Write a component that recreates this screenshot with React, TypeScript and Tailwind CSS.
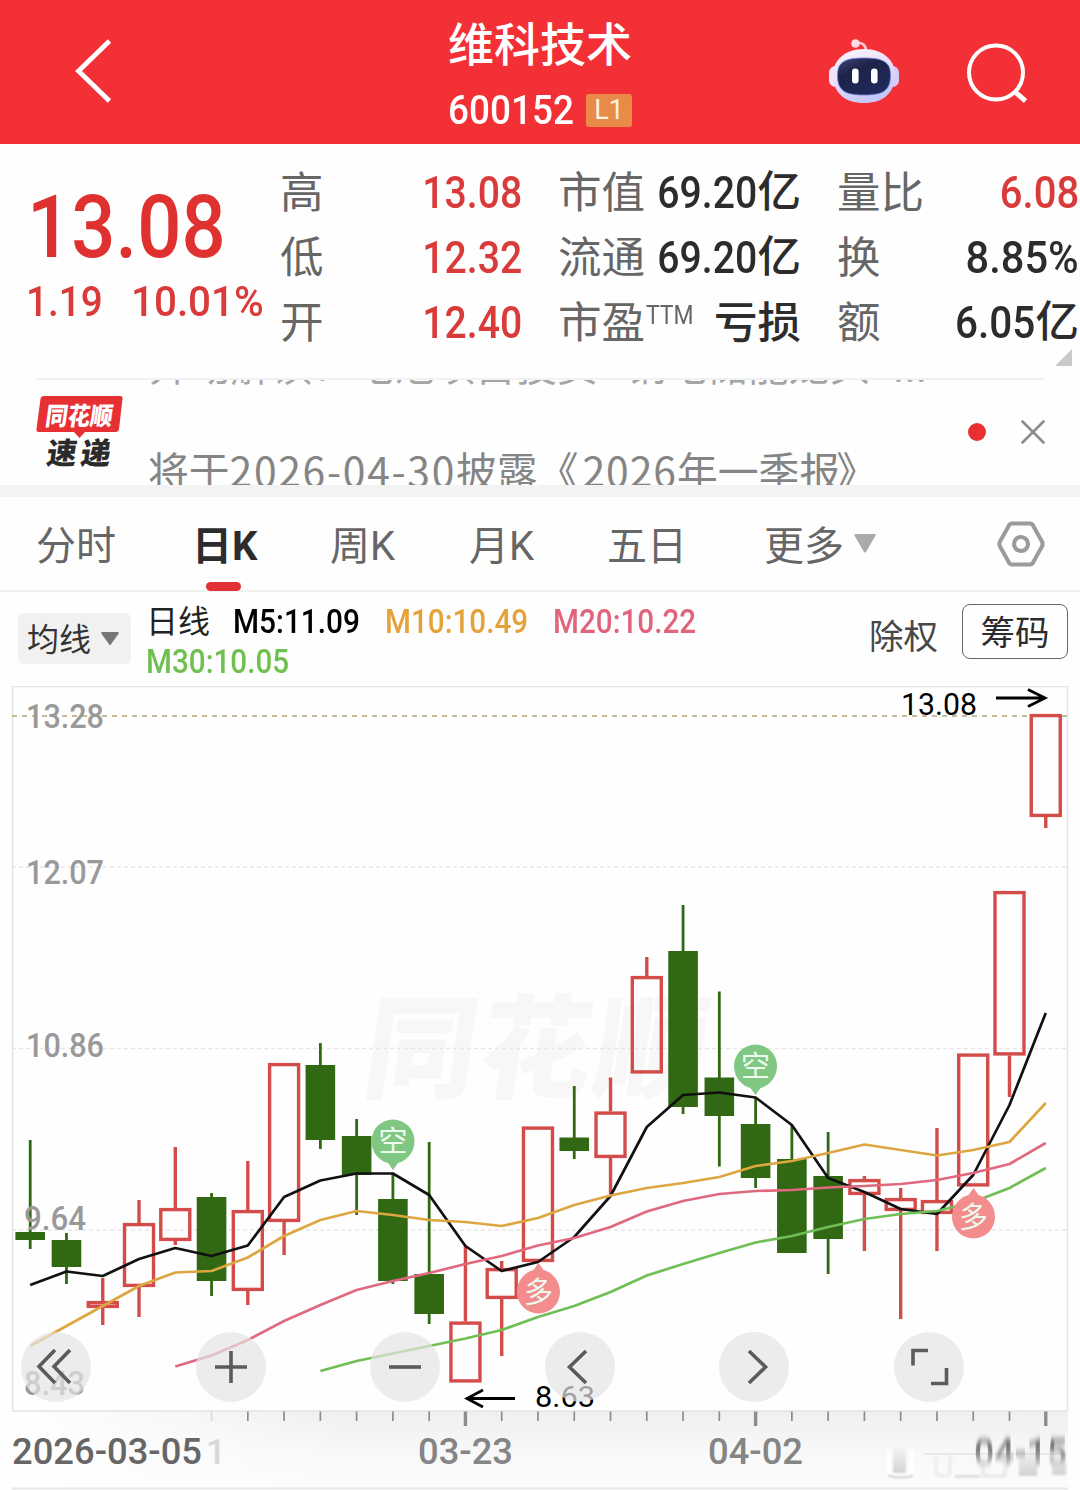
import React from "react";

type Candle = {
  up: boolean;
  high: number;
  top: number;
  bottom: number;
  low: number;
};

type Stat = {
  label: string;
  sup?: string;
  value: string;
  unit?: string;
  color?: string;
  stretch?: string;
};

const STEP = 36.27;
const FIRST_X = 30.2;
const xAt = (i: number) => FIRST_X + i * STEP;

const c = (up: boolean, high: number, top: number, bottom: number, low: number): Candle => ({ up, high, top, bottom, low });

const candles: Candle[] = [
  c(false, 1140, 1232, 1240, 1249),
  c(false, 1233, 1240, 1267, 1284),
  c(true, 1278, 1301, 1308, 1325),
  c(true, 1200, 1223, 1287, 1317),
  c(true, 1147, 1208, 1241, 1245),
  c(false, 1193, 1197, 1281, 1296),
  c(true, 1161, 1210, 1291, 1305),
  c(true, 1063, 1063, 1222, 1255),
  c(false, 1043, 1065, 1140, 1149),
  c(false, 1119, 1136, 1175, 1215),
  c(false, 1174, 1199, 1281, 1284),
  c(false, 1142, 1274, 1314, 1324),
  c(true, 1246, 1321.5, 1382.5, 1382.5),
  c(true, 1261, 1268, 1299, 1356),
  c(true, 1126.5, 1126.5, 1262, 1262),
  c(false, 1086, 1137.5, 1151, 1159),
  c(true, 1077.5, 1111.5, 1158, 1194),
  c(true, 957, 976, 1073.5, 1073.5),
  c(false, 905, 951, 1107, 1114),
  c(false, 991.5, 1077.5, 1116, 1166.5),
  c(false, 1098, 1124, 1178, 1188),
  c(false, 1125, 1159, 1253, 1253),
  c(false, 1132, 1176, 1239, 1274),
  c(true, 1176, 1179, 1195, 1251),
  c(true, 1188, 1198, 1211, 1319),
  c(true, 1128, 1200, 1214, 1251),
  c(true, 1053.5, 1053.5, 1186.5, 1186.5),
  c(true, 891, 891, 1055.5, 1097),
  c(true, 714, 714, 817, 828),
];

const ma5 = [1285, 1271.5, 1276, 1259, 1248, 1256, 1245.5, 1197, 1180.5, 1173.5, 1173.5, 1195, 1246, 1271, 1262, 1237, 1196, 1127, 1095, 1092.5, 1097.5, 1125, 1178, 1192, 1209, 1214, 1175, 1105, 1013];
const ma10 = [1346, 1326, 1306, 1286, 1272.5, 1271, 1257.5, 1236, 1220, 1211, 1215, 1220, 1222, 1226, 1218, 1205, 1195.5, 1188, 1183, 1177, 1166, 1161, 1153, 1144.5, 1150, 1155.5, 1150, 1142, 1103];
const ma20 = [1366.5, 1355.5, 1340, 1321, 1305, 1290, 1281, 1273, 1264, 1256, 1245.5, 1238, 1227, 1211.5, 1201, 1194, 1191, 1190, 1187.5, 1186, 1184, 1180, 1173, 1164, 1143];
const ma30 = [1371, 1361, 1353.5, 1346, 1338.5, 1330, 1317, 1306, 1292, 1275.5, 1264, 1253, 1242.5, 1236, 1227, 1219, 1214, 1211, 1202, 1188, 1168];

const toPoints = (ys: number[]) => {
  const offset = candles.length - ys.length;
  return ys.map((y, i) => `${xAt(i + offset)},${y}`).join(" ");
};

const stats: Stat[][] = [
  [
    { label: "高", value: "13.08", color: "text-[#d93a3a]" },
    { label: "低", value: "12.32", color: "text-[#d93a3a]" },
    { label: "开", value: "12.40", color: "text-[#d93a3a]" },
  ],
  [
    { label: "市值", value: "69.20", unit: "亿" },
    { label: "流通", value: "69.20", unit: "亿" },
    { label: "市盈", sup: "TTM", value: "", unit: "亏损" },
  ],
  [
    { label: "量比", value: "6.08", color: "text-[#d93a3a]", stretch: "scale-x-[0.91]" },
    { label: "换", value: "8.85%", stretch: "scale-x-[0.945]" },
    { label: "额", value: "6.05", unit: "亿", stretch: "scale-x-[0.92]" },
  ],
];

function RobotIcon() {
  return (
    <svg width="72" height="68" viewBox="0 0 72 68">
      <defs>
        <linearGradient id="shell" x1="0" y1="0" x2="0.4" y2="1">
          <stop offset="0" stopColor="#fff6fb" />
          <stop offset="0.6" stopColor="#e6dcfa" />
          <stop offset="1" stopColor="#c5c8f8" />
        </linearGradient>
        <linearGradient id="visor" x1="0" y1="0" x2="0.6" y2="1">
          <stop offset="0" stopColor="#3d4370" />
          <stop offset="0.4" stopColor="#1d2348" />
          <stop offset="1" stopColor="#20295a" />
        </linearGradient>
      </defs>
      <path d="M28 6 C34 5 38 8 38 14" fill="none" stroke="#fbc9d6" strokeWidth="2.6" />
      <circle cx="27.500" cy="6.500" r="4.300" fill="#ffdbe4" />
      <rect x="1" y="29" width="13" height="21" rx="6.500" fill="#f3e3f6" />
      <rect x="58" y="29" width="13" height="21" rx="6.500" fill="#d5cdfa" />
      <path d="M36 12 C55 12 67 23 67 38 C67 56 55 66 36 66 C17 66 5 56 5 38 C5 23 17 12 36 12 Z" fill="url(#shell)" />
      <path d="M36 21 C55 21 62.500 25 62.500 38 C62.500 53 56 58 36 58 C16 58 9.500 53 9.500 38 C9.500 25 17 21 36 21 Z" fill="url(#visor)" stroke="#6d7be0" strokeWidth="0.800" />
      <rect x="24" y="31.500" width="6.600" height="15" rx="3.300" fill="#fff" />
      <rect x="43" y="31.500" width="6.600" height="15" rx="3.300" fill="#fff" />
    </svg>
  );
}

function Header() {
  return (
    <header className="grid h-36 grid-cols-[1fr_190px_1fr] bg-[#f23036] text-white">
      <div className="pl-[74px] pt-[38px]">
        <svg width="40" height="66" viewBox="0 0 40 66" fill="none" stroke="#fff" strokeWidth="4.8">
          <path d="M35.500 3 L4.500 33 L35.500 63" />
        </svg>
      </div>
      <div className="flex flex-col items-center">
        <h1 className="mt-[14px] h-[62px] text-[46px] font-medium leading-[62px]">维科技术</h1>
        <div className="mt-[10px] flex h-12 w-[184px] items-center">
          <span className="w-[138px] origin-left scale-x-[0.89] text-[41.500px] font-medium leading-[48px]">600152</span>
          <span className="flex h-[33px] w-[46px] items-center justify-center rounded-[3px] bg-[#e88b49] text-[27px] text-[#fff3e0]">L1</span>
        </div>
      </div>
      <div className="flex justify-end pr-[51px]">
        <div className="mr-[65px] pt-[37px]">
          <RobotIcon />
        </div>
        <svg className="mt-[42px]" width="64" height="64" viewBox="0 0 64 64" fill="none" stroke="#fff" strokeWidth="4">
          <circle cx="31" cy="30.500" r="27" />
          <path d="M49 49 L60.500 59" strokeWidth="5" />
        </svg>
      </div>
    </header>
  );
}

function StatRow({ label, sup, value, unit, color = "text-[#2c2c2c]", stretch = "scale-x-[0.89]" }: Stat) {
  return (
    <div className="flex h-[65px] items-center justify-between text-[43.500px] leading-[65px]">
      <span className="flex text-[#666]">
        {label}
        {sup && <span className="origin-left scale-x-90 pl-px text-[25.500px] leading-[49px]">{sup}</span>}
      </span>
      <span className={`flex font-medium ${color}`}>
        {value && <span className={`origin-right text-[44px] leading-[67px] ${stretch}`}>{value}</span>}
        {unit}
      </span>
    </div>
  );
}

function Quote() {
  return (
    <section className="relative flex h-[234px] pt-[17px]">
      <div className="w-[281px] shrink-0 text-[#e03131]">
        <div className="ml-[27px] mt-[16px] h-[100px] w-[220px] origin-left scale-x-[0.895] text-[87px] font-medium leading-[100px]">13.08</div>
        <div className="flex h-[52px] text-[42.500px] font-medium leading-[49px] text-[#d93a3a]">
          <span className="ml-[26px] w-[105px] origin-left scale-x-[0.91]">1.19</span>
          <span className="origin-left scale-x-[0.95]">10.01%</span>
        </div>
      </div>
      <div className="-ml-px w-[242px] shrink-0">{stats[0].map((s) => <StatRow key={s.label} {...s} />)}</div>
      <div className="ml-[36px] w-[243px] shrink-0">{stats[1].map((s) => <StatRow key={s.label} {...s} />)}</div>
      <div className="ml-[36px] w-[242px] shrink-0">{stats[2].map((s) => <StatRow key={s.label} {...s} />)}</div>
      <svg className="absolute bottom-3 right-2" width="17" height="17" viewBox="0 0 17 17">
        <path d="M17 0 V17 H0 Z" fill="#c9c9c9" />
      </svg>
    </section>
  );
}

function NewsLogo() {
  return (
    <svg width="90" height="76" viewBox="0 0 90 76" fontFamily="'Noto Sans CJK SC', sans-serif" fontWeight="900">
      <path d="M8 1 H84 Q87 1 86.500 4 L83 34 Q82.500 37 79.500 37 H49 L43.500 43 L38 37 H3 Q0 37 0.500 34 L4.500 4 Q5 1 8 1 Z" fill="#e63034" />
      <text x="0" y="0" fontSize="25" fill="#fff" textLength="67" lengthAdjust="spacingAndGlyphs" transform="translate(8.500 29.500) skewX(-8)">同花顺</text>
      <text x="0" y="0" fontSize="30" fill="#2b2b2b" textLength="64" transform="translate(9.500 69) skewX(-8)">速递</text>
    </svg>
  );
}

function NewsTicker() {
  return (
    <section className="flex h-[107px] overflow-hidden [font-family:'Noto_Sans_CJK_SC',sans-serif]">
      <div className="w-[149px] shrink-0 pl-[36px] pt-[17px]">
        <NewsLogo />
      </div>
      <div className="-ml-[112px] h-[107px] w-[1007px] border-t-2 border-[#f1f1f1] pl-[112px]">
        <div className="flex h-[105px] flex-col overflow-hidden whitespace-nowrap text-[40.800px] text-[#858585]">
          <div className="-mt-[38px] h-[44px] shrink-0 leading-[44px] text-[#a5a5a5]">异动解读：电池项目投资<span className="tracking-[5px]">+</span>钠电储能龙头+...</div>
          <div className="mt-[54px] h-[60px] shrink-0 leading-[60px]">
            <span className="-ml-px">将于</span><span className="tracking-[1.700px]">2026-04-30</span>披露《<span className="ml-[4px] tracking-[1px]">2026</span>年一季报<span className="-ml-[4px]">》</span>
          </div>
        </div>
      </div>
      <div className="-ml-[76px] flex h-[107px] items-center gap-[35px]">
        <span className="size-[18px] rounded-full bg-[#e93030]" />
        <svg width="24" height="24" viewBox="0 0 24 24" stroke="#8c8c8c" strokeWidth="2.6" strokeLinecap="round">
          <path d="M1.500 1.500 L22.500 22.500 M22.500 1.500 L1.500 22.500" />
        </svg>
      </div>
    </section>
  );
}

function PeriodTabs() {
  return (
    <nav className="grid h-[95px] grid-cols-[156px_138px_139px_138px_157px_1fr_auto] items-center border-b-2 border-[#f0f0f0] pl-[36px] pr-[35px] text-[40px] leading-[60px] text-[#666]">
      <span className="pt-1.5">分时</span>
      <span className="relative pt-1.5 font-bold text-[#2c2c2c]">
        日K
        <i className="absolute -bottom-[14px] left-[14px] h-[9px] w-[35px] rounded-full bg-[#e03237]" />
      </span>
      <span className="pt-1.5">周K</span>
      <span className="pt-1.5">月K</span>
      <span className="pt-1.5">五日</span>
      <span className="flex items-center pt-1.5">
        更多
        <svg className="-mt-1.5 ml-[10px]" width="22" height="19" viewBox="0 0 22 19">
          <path d="M1 0 H21 Q22 0 21.500 1.500 L12 18 Q11 19 10 18 L0.500 1.500 Q0 0 1 0 Z" fill="#aaa" />
        </svg>
      </span>
      <svg width="48" height="46" viewBox="0 0 48 46" fill="none" stroke="#9b9b9b">
        <path d="M14.500 2.500 H33.500 L35.500 3.500 L45.500 21.500 V24.500 L35.500 42.500 L33.500 43.500 H14.500 L12.500 42.500 L2.500 24.500 V21.500 L12.500 3.500 Z" strokeWidth="4" strokeLinejoin="round" />
        <circle cx="24" cy="23" r="7" strokeWidth="4.2" />
      </svg>
    </nav>
  );
}

function Indicators() {
  return (
    <section className="flex h-[94px]">
      <div className="ml-[18px] mt-[21px] flex h-[51px] w-[113px] items-center rounded-md bg-[#f1f1f1] pl-[9px] text-[32px] text-[#333]">
        <span className="pt-0.5">均线</span>
        <svg className="ml-[10px]" width="18" height="13" viewBox="0 0 18 13">
          <path d="M1 0 H17 L18 1 L9.500 13 H8.500 L0 1 Z" fill="#777" />
        </svg>
      </div>
      <div className="ml-[15px] mt-[9px] w-[640px] text-[33.500px] font-medium leading-[41px] text-black">
        <div className="flex h-[41px]">
          <span className="w-[87px] text-[32px] font-normal leading-[43px] text-[#222]">日线</span>
          <span className="w-[152px] origin-left scale-x-[0.89]">M5:11.09</span>
          <span className="w-[168px] origin-left scale-x-[0.885] text-[#e5a23a]">M10:10.49</span>
          <span className="origin-left scale-x-[0.885] text-[#e2647c]">M20:10.22</span>
        </div>
        <div className="-mt-px origin-left scale-x-[0.885] text-[#6fc04f]">M30:10.05</div>
      </div>
      <div className="ml-auto mr-3 flex">
        <span className="mt-[19px] h-[52px] text-[34.500px] leading-[52px] text-[#484848]">除权</span>
        <span className="ml-6 mt-[12px] flex h-[55px] w-[106px] items-center justify-center rounded-lg border border-[#666] pt-1 text-[34.500px] text-[#2c2c2c]">筹码</span>
      </div>
    </section>
  );
}

function Signal({ x, y, kind }: { x: number; y: number; kind: "空" | "多" }) {
  const short = kind === "空";
  return (
    <g transform={`translate(${x} ${y})`}>
      <path
        d="M-21.500 0 A21.500 21.500 0 1 1 21.500 0 C21.500 12 13 20 5 22 L0 29 L-5 22 C-13 20 -21.500 12 -21.500 0 Z"
        fill={short ? "#7fc783" : "#f38d8d"}
        transform={short ? undefined : "scale(1 -1)"}
      />
      <text y="10.500" fontSize="29" textAnchor="middle" fill="#eefaee" fontFamily="'Noto Sans CJK SC', sans-serif">{kind}</text>
    </g>
  );
}

function Chart() {
  const labels = [
    { text: "13.28", y: 728, x: 26, w: 78 },
    { text: "12.07", y: 884, x: 26, w: 78 },
    { text: "10.86", y: 1057, x: 26, w: 78 },
    { text: "9.64", y: 1230, x: 24, w: 62 },
    { text: "8.43", y: 1395, x: 24, w: 61 },
  ];
  return (
    <svg className="block" width="1080" height="804" viewBox="0 686 1080 804" fontFamily="Roboto, sans-serif">
      <defs>
        <linearGradient id="axis" x1="0" y1="0" x2="0" y2="1">
          <stop offset="0" stopColor="#efefef" />
          <stop offset="0.5" stopColor="#f8f8f8" />
          <stop offset="1" stopColor="#fcfcfc" />
        </linearGradient>
        <linearGradient id="axisFade" x1="0" y1="0" x2="1" y2="0">
          <stop offset="0" stopColor="#fff" />
          <stop offset="1" stopColor="#fff" stopOpacity="0" />
        </linearGradient>
        <linearGradient id="ghost" gradientUnits="userSpaceOnUse" x1="0" y1="1438" x2="0" y2="1468">
          <stop offset="0" stopColor="#666" />
          <stop offset="0.5" stopColor="#8a8a8a" />
          <stop offset="1" stopColor="#dedede" />
        </linearGradient>
        <linearGradient id="smudge" x1="0" y1="0" x2="0" y2="1">
          <stop offset="0" stopColor="#f8f8f8" />
          <stop offset="1" stopColor="#d2d2d2" />
        </linearGradient>
        <filter id="drag" x="-5%" y="-30%" width="110%" height="160%">
          <feGaussianBlur stdDeviation="0.500 3" />
        </filter>
        <filter id="soften" x="-10%" y="-10%" width="120%" height="120%">
          <feGaussianBlur stdDeviation="1" />
        </filter>
      </defs>

      {/* plot frame and price grid */}
      <rect x="12" y="1411" width="1056" height="77" fill="url(#axis)" />
      <rect x="12" y="1411" width="330" height="77" fill="url(#axisFade)" />
      <text x="0" y="0" fontSize="112" fontWeight="900" fill="#f7f7f7" textLength="342" fontFamily="'Noto Sans CJK SC', sans-serif" transform="translate(360 1089) skewX(-8)">同花顺</text>
      <rect x="12.500" y="686.500" width="1055" height="724.500" fill="none" stroke="#e4e4e4" strokeWidth="1.500" />
      <path d="M12 867 H1067 M12 1048.500 H1067 M12 1230 H1067" stroke="#e6e6e6" strokeWidth="1.300" strokeDasharray="4 3" />
      <path d="M12 716 H1067" stroke="#b3a878" strokeWidth="1.500" strokeDasharray="5 5" />
      <path d="M12 1488.500 H1068" stroke="#e8e8e8" strokeWidth="2" />

      {candles.map((k, i) => {
        const x = xAt(i);
        return k.up ? (
          <g key={i} stroke="#d34c4a" strokeWidth="3.400" fill="none">
            {k.high < k.top && <path d={`M${x} ${k.high} V${k.top}`} />}
            {k.low > k.bottom && <path d={`M${x} ${k.bottom} V${k.low}`} />}
            <rect x={x - 14.500} y={k.top + 1.600} width="29" height={k.bottom - k.top - 3.200} />
          </g>
        ) : (
          <g key={i} fill="#306814">
            <rect x={x - 1.400} y={k.high} width="2.800" height={k.low - k.high} />
            <rect x={x - 14.800} y={k.top} width="29.600" height={k.bottom - k.top} />
          </g>
        );
      })}

      <g fill="#999" fontSize="33.500" fontWeight="500">
        {labels.map((l) => (
          <text key={l.text} x={l.x} y={l.y} textLength={l.w} lengthAdjust="spacingAndGlyphs">{l.text}</text>
        ))}
      </g>

      <g fill="none" strokeWidth="2.700" strokeLinejoin="round">
        <polyline points={toPoints(ma5)} stroke="#111" />
        <polyline points={toPoints(ma10)} stroke="#dda640" />
        <polyline points={toPoints(ma20)} stroke="#e0697f" />
        <polyline points={toPoints(ma30)} stroke="#70be56" />
      </g>

      <Signal x={393} y={1141} kind="空" />
      <Signal x={755.5} y={1066} kind="空" />
      <Signal x={538.5} y={1292} kind="多" />
      <Signal x={973.5} y={1217} kind="多" />

      {/* high / low callouts */}
      <g fill="none" stroke="#000" strokeWidth="2.800">
        <path d="M996 698 H1045 M1028 689.500 L1045 698 L1028 706.500" />
        <path d="M515 1398.500 H467 M483 1390 L467 1398.500 L483 1407" />
      </g>
      <text x="901" y="715" fontSize="30.500" textLength="76" lengthAdjust="spacingAndGlyphs">13.08</text>
      <text x="535" y="1407" fontSize="30" textLength="60" lengthAdjust="spacingAndGlyphs">8.63</text>

      {candles.map((_, i) =>
        i < 5 ? null : (
          <path
            key={i}
            d={`M${xAt(i)} 1411.500 V${i % 8 === 4 ? 1426 : 1421}`}
            stroke={i === 5 ? "#ddd" : "#8c8c8c"}
            strokeWidth={i % 8 === 4 ? 3.4 : 1.7}
          />
        )
      )}

      {/* worn-off corner caption */}
      <g filter="url(#soften)">
        <path d="M889 1450 V1474 Q900 1479 912 1474 V1450" fill="none" stroke="#fff" strokeWidth="4" />
        <rect x="893" y="1445" width="13" height="28" fill="url(#smudge)" />
        <path d="M888 1475.500 Q900 1479.500 913 1475.500" fill="none" stroke="#bbb" strokeWidth="1.500" />
        <path d="M936 1455 V1474 Q943 1478 950 1474 V1455" fill="none" stroke="#ececec" strokeWidth="3" />
        <rect x="955" y="1475.500" width="25" height="1.800" fill="#ccc" />
        <path d="M983 1460 V1476 H1005 V1460" fill="none" stroke="#e8e8e8" strokeWidth="3" />
        <rect x="1019" y="1447" width="18" height="29" fill="url(#smudge)" />
        <rect x="1052" y="1452" width="14" height="23" fill="url(#smudge)" />
      </g>
      <g fontSize="36" fontWeight="500">
        <text x="12" y="1464" fill="#666" textLength="190" lengthAdjust="spacingAndGlyphs">2026-03-05</text>
        <text x="206" y="1464" fill="#d8d8d8" fontSize="35">1</text>
        <text x="418" y="1464" fill="#858585" textLength="95" lengthAdjust="spacingAndGlyphs">03-23</text>
        <text x="708" y="1464" fill="#858585" textLength="95" lengthAdjust="spacingAndGlyphs">04-02</text>
        <text x="974" y="1465" fill="url(#ghost)" filter="url(#drag)" textLength="93" lengthAdjust="spacingAndGlyphs">04-15</text>
      </g>
      <path d="M925 1454 H1067" stroke="#999" strokeOpacity="0.3" />
    </svg>
  );
}

const toolIcons = [
  "M34 18 L18 34.500 L34 51 M49 18 L33 34.500 L49 51",
  "M19 35 H51 M35 19 V51",
  "M19 35 H51",
  "M41 19 L24.500 35 L41 51",
  "M30 19 L46.500 35 L30 51",
  "M19 33.500 V18.500 H34 M52.500 36 V51.500 H37",
];

function ChartTools() {
  return (
    <div className="absolute left-[21px] top-[646px] flex gap-[104.600px]">
      {toolIcons.map((d) => (
        <button key={d} className="size-[70px] rounded-full bg-[#e4e4e4]/70">
          <svg width="70" height="70" viewBox="0 0 70 70" fill="none" stroke="#5b5b5b" strokeWidth="3.6">
            <path d={d} />
          </svg>
        </button>
      ))}
    </div>
  );
}

export default function App() {
  return (
    <main className="h-[1490px] w-[1080px] overflow-hidden bg-[#fefefe] [font-family:Roboto,'Noto_Sans_CJK_SC',sans-serif]">
      <Header />
      <Quote />
      <NewsTicker />
      <div className="h-3 bg-[#f3f3f3]" />
      <PeriodTabs />
      <Indicators />
      <div className="relative">
        <Chart />
        <ChartTools />
      </div>
    </main>
  );
}
